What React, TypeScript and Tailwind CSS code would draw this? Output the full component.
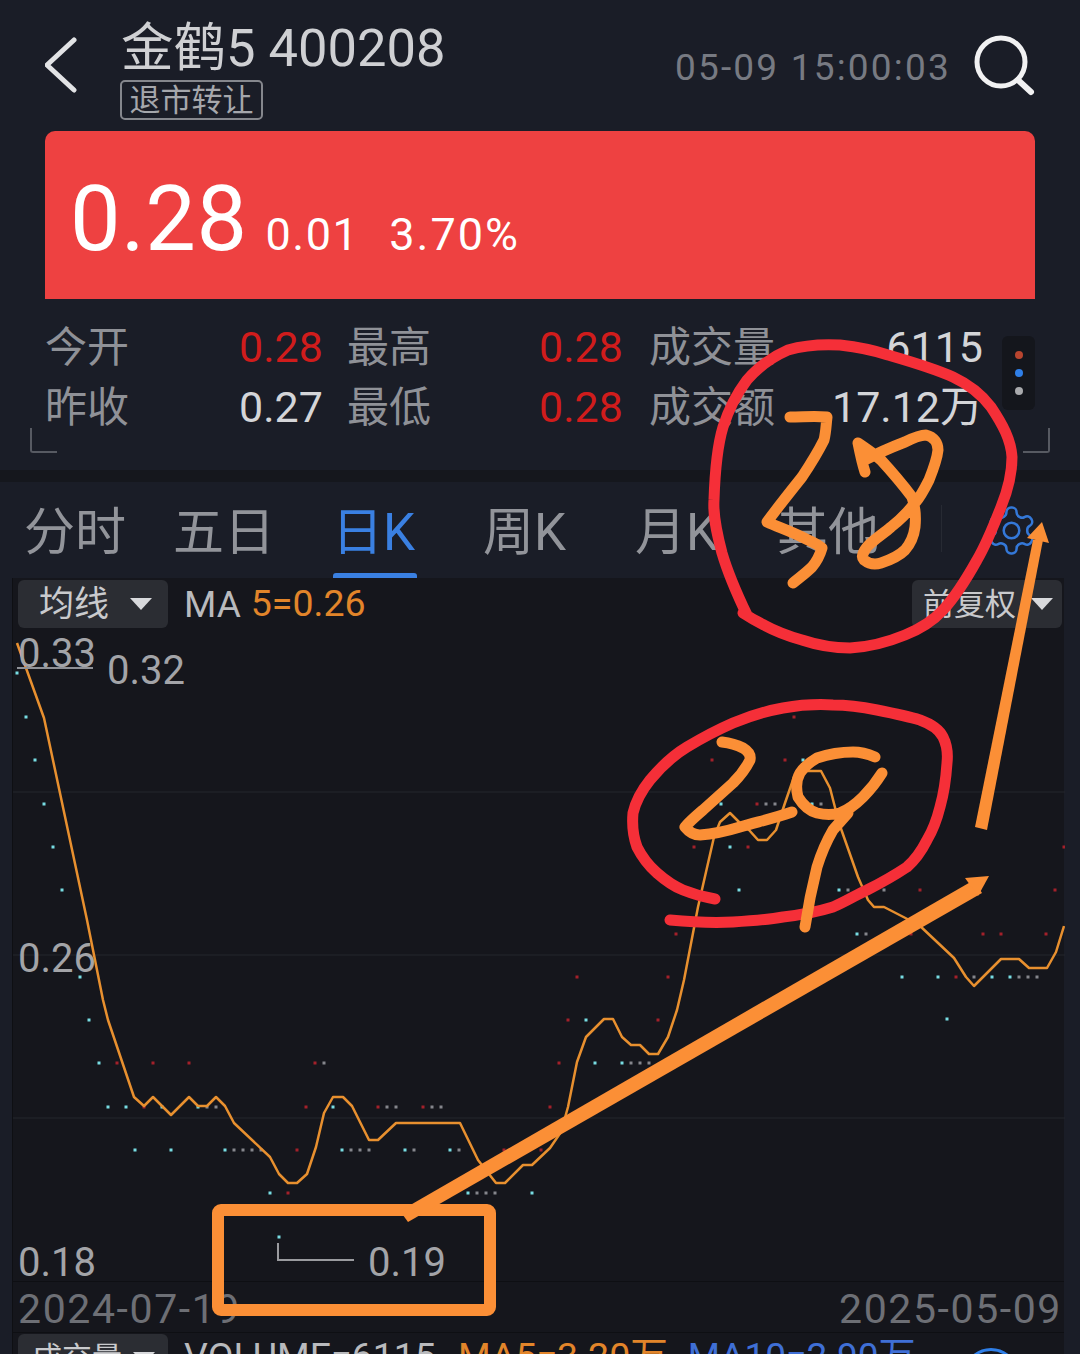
import React from "react";

const FONT = { fontFamily: 'Roboto, "Noto Sans CJK SC", sans-serif' };

const MA_LINE =
  "16,643 43,718 86,920 102,1000 107,1020 133,1097 143,1106 152,1097 170,1115 188,1097 197,1106 206,1106 215,1097 224,1106 233,1123 269,1157 278,1174 287,1183 296,1183 306,1174 315,1147 323,1113 332,1097 342,1097 351,1106 368,1140 377,1140 395,1123 459,1123 477,1160 495,1183 504,1183 522,1165 531,1165 549,1148 560,1132 567,1107 576,1062 585,1037 603,1019 612,1019 621,1037 630,1045 639,1045 648,1054 657,1054 667,1037 676,1010 683,980 697,907 713,837 719,822 729,813 738,822 748,830 757,840 766,840 775,830 784,803 793,777 802,771 820,771 829,788 838,823 857,877 867,900 873,907 883,907 918,925 953,958 965,977 973,986 1000,959 1018,959 1028,968 1046,968 1055,952 1063,926";

const CYAN: [number, number][] = [
  [16, 673], [25, 717], [34, 760], [43, 804], [52, 847], [61, 890], [79, 977], [88, 1020], [98, 1063],
  [107, 1107], [125, 1107], [161, 1107], [197, 1107], [332, 1107], [134, 1150], [170, 1150], [224, 1150],
  [341, 1150], [404, 1150], [449, 1150], [269, 1193], [467, 1193], [531, 1193], [278, 1237], [585, 1020],
  [594, 1063], [621, 1063], [802, 760], [720, 804], [811, 804], [729, 847], [738, 890], [838, 890],
  [856, 934], [901, 977], [937, 977], [991, 977], [1009, 977], [946, 1019],
];
const RED: [number, number][] = [
  [116, 1063], [152, 1063], [188, 1063], [314, 1063], [143, 1107], [305, 1107], [377, 1107], [422, 1107],
  [549, 1107], [296, 1150], [503, 1150], [540, 1150], [287, 1193], [576, 977], [667, 977], [567, 1020],
  [657, 1020], [558, 1063], [793, 717], [711, 760], [784, 760], [756, 804], [693, 847], [747, 847],
  [1063, 847], [919, 890], [1054, 890], [675, 934], [910, 934], [982, 934], [1000, 934], [1045, 934],
  [955, 977],
];
const GREY: [number, number][] = [
  [323, 1063], [206, 1107], [215, 1107], [386, 1107], [395, 1107], [431, 1107], [440, 1107], [233, 1150],
  [242, 1150], [251, 1150], [260, 1150], [350, 1150], [359, 1150], [368, 1150], [413, 1150], [458, 1150],
  [476, 1193], [485, 1193], [494, 1193], [630, 1063], [639, 1063], [648, 1063], [765, 804], [774, 804],
  [820, 804], [847, 890], [883, 890], [865, 934], [973, 977], [1018, 977], [1027, 977], [1036, 977],
];

function Dots({ points, color }: { points: [number, number][]; color: string }) {
  return (
    <g fill={color}>
      {points.map(([x, y]) => (
        <rect key={`${x}-${y}`} x={x - 1.5} y={y - 1.5} width={3} height={3} />
      ))}
    </g>
  );
}

function Caret() {
  return (
    <svg width="24" height="14" viewBox="0 0 24 14" className="shrink-0">
      <path d="M1 1h22L12 13z" fill="#d8d9dc" />
    </svg>
  );
}

function StatRow({ cells }: { cells: { label: string; value: string; tone: string }[] }) {
  return (
    <div className="grid h-[60px] grid-cols-[194px_108px_192px_108px_auto_1fr] items-center text-[42px] leading-none">
      {cells.map((c) => (
        <React.Fragment key={c.label}>
          <span className="text-[#8f9197]">{c.label}</span>
          <span className={`mt-[-2px] text-[43px] ${c.tone}`}>{c.value}</span>
        </React.Fragment>
      ))}
    </div>
  );
}

const TABS = [
  { label: "分时", w: "w-[149px]" },
  { label: "五日", w: "w-[159px]" },
  { label: "日K", w: "w-[151px]", active: true },
  { label: "周K", w: "w-[152px]" },
  { label: "月K", w: "w-[142px]" },
  { label: "其他", w: "w-[164px]" },
];

export default function App() {
  return (
    <div className="relative h-[1354px] w-[1080px] overflow-hidden bg-[#1a1d27] text-[#d5d6d9]" style={FONT}>
      <header className="flex h-[131px] pl-[45px] pr-[45px]">
        <svg width="32" height="56" viewBox="0 0 32 56" className="mt-[37px] shrink-0">
          <path d="M29 3 2 28l27 25" fill="none" stroke="#e2e3e5" strokeWidth="5" strokeLinecap="round" strokeLinejoin="round" />
        </svg>
        <div className="ml-[44px] flex flex-col">
          <div className="mt-[18px] h-[60px] text-[52.5px] leading-[60px] whitespace-nowrap text-[#cfd0d3]">金鹤5 400208</div>
          <div className="-ml-[1px] mt-[2px] flex h-[40px] w-[143px] items-center justify-center rounded-[5px] border-2 border-[#85878d] text-[31px] leading-none text-[#a5a7ac]">
            退市转让
          </div>
        </div>
        <div className="ml-auto mt-[45px] h-[46px] text-[37px] leading-[46px] tracking-[2.2px] text-[#777a82]">05-09 15:00:03</div>
        <svg width="62" height="62" viewBox="0 0 62 62" className="ml-[22px] mt-[35px] shrink-0">
          <circle cx="28" cy="27" r="24" fill="none" stroke="#f1f1f2" strokeWidth="5" />
          <path d="M45 45l13 12" fill="none" stroke="#f1f1f2" strokeWidth="6" strokeLinecap="round" />
        </svg>
      </header>

      <section className="mx-[45px] flex h-[168px] items-center rounded-t-[10px] bg-[#ee4141] pl-[25px] text-white">
        <span className="mt-[10px] text-[90px] leading-none tracking-[0.5px]">0.28</span>
        <span className="ml-[18px] mt-[38px] text-[45px] leading-none tracking-[1.5px]">0.01</span>
        <span className="ml-[30px] mt-[38px] text-[45px] leading-none tracking-[2px]">3.70%</span>
      </section>

      <section className="relative h-[171px] pl-[45px] pr-[45px] pt-[19px]">
        <StatRow
          cells={[
            { label: "今开", value: "0.28", tone: "text-[#d01c1c]" },
            { label: "最高", value: "0.28", tone: "text-[#d01c1c]" },
          ]}
        />
        <StatRow
          cells={[
            { label: "昨收", value: "0.27", tone: "text-[#d4d5d8]" },
            { label: "最低", value: "0.28", tone: "text-[#d01c1c]" },
          ]}
        />
        <div className="absolute left-[649px] top-[19px] flex w-[334px] flex-col text-[42px] leading-none">
          <div className="flex h-[60px] items-center justify-between">
            <span className="text-[#8f9197]">成交量</span>
            <span className="mt-[-2px] text-[43px] text-[#d4d5d8]">6115</span>
          </div>
          <div className="flex h-[60px] items-center justify-between">
            <span className="text-[#8f9197]">成交额</span>
            <span className="mt-[-2px] text-[43px] text-[#d4d5d8]">17.12万</span>
          </div>
        </div>
        <div className="absolute left-[1002px] top-[37px] flex h-[74px] w-[33px] flex-col items-center justify-center gap-[10px] rounded-[6px] bg-[#14161c]">
          <span className="h-[8px] w-[8px] rounded-full bg-[#b8452f]" />
          <span className="h-[8px] w-[8px] rounded-full bg-[#2f7fe8]" />
          <span className="h-[8px] w-[8px] rounded-full bg-[#a9aaad]" />
        </div>
        <div className="absolute left-[30px] top-[129px] h-[25px] w-[27px] rounded-bl-[3px] border-b-2 border-l-2 border-[#575a62]" />
        <div className="absolute left-[1023px] top-[129px] h-[25px] w-[27px] rounded-br-[3px] border-b-2 border-r-2 border-[#575a62]" />
      </section>

      <div className="h-[12px] bg-[#15171d]" />

      <nav className="flex h-[96px] pl-[24px]">
        {TABS.map((t) => (
          <div key={t.label} className={`${t.w} relative flex h-full items-center pt-[5px]`}>
            <span className={`text-[51px] leading-none whitespace-nowrap ${t.active ? "text-[#3a80e2]" : "text-[#92949a]"}`}>{t.label}</span>
            {t.active && <span className="absolute bottom-0 left-[1px] h-[5px] w-[84px] rounded-t-[3px] bg-[#3a80e2]" />}
          </div>
        ))}
        <div className="mt-[23px] h-[47px] w-px bg-[#272a33]" />
        <svg width="55" height="57" viewBox="0 0 24 24" className="ml-[42px] mt-[20px] shrink-0" fill="none" stroke="#3478d8" strokeWidth="1.1" strokeLinejoin="round">
          <path d="M12.22 2h-.44a2 2 0 0 0-2 2v.18a2 2 0 0 1-1 1.73l-.43.25a2 2 0 0 1-2 0l-.15-.08a2 2 0 0 0-2.73.73l-.22.38a2 2 0 0 0 .73 2.73l.15.1a2 2 0 0 1 1 1.72v.51a2 2 0 0 1-1 1.74l-.15.09a2 2 0 0 0-.73 2.73l.22.38a2 2 0 0 0 2.73.73l.15-.08a2 2 0 0 1 2 0l.43.25a2 2 0 0 1 1 1.73V20a2 2 0 0 0 2 2h.44a2 2 0 0 0 2-2v-.18a2 2 0 0 1 1-1.73l.43-.25a2 2 0 0 1 2 0l.15.08a2 2 0 0 0 2.73-.73l.22-.39a2 2 0 0 0-.73-2.73l-.15-.08a2 2 0 0 1-1-1.74v-.5a2 2 0 0 1 1-1.74l.15-.09a2 2 0 0 0 .73-2.73l-.22-.38a2 2 0 0 0-2.73-.73l-.15.08a2 2 0 0 1-2 0l-.43-.25a2 2 0 0 1-1-1.73V4a2 2 0 0 0-2-2z" />
          <circle cx="12" cy="12" r="3.4" />
        </svg>
      </nav>

      <main className="ml-[12px] flex h-[803px] w-[1052px] flex-col border-l border-[#0e0f13] bg-[#15161c]">
        <div className="flex h-[50px] shrink-0 items-start justify-between pl-[5px] pr-[2px] pt-[2px]">
          <div className="flex items-center">
            <div className="flex h-[48px] w-[150px] items-center rounded-[6px] bg-[#2b2d33] pl-[21px]">
              <span className="text-[35px] leading-none text-[#c9cacd]">均线</span>
              <span className="ml-[20px] flex"><Caret /></span>
            </div>
            <span className="ml-[16px] text-[37px] leading-none text-[#b9babd]">MA</span>
            <span className="ml-[10px] text-[37.5px] leading-none text-[#e2852a]">5=0.26</span>
          </div>
          <div className="flex h-[48px] w-[150px] items-center rounded-[6px] bg-[#2b2d33] pl-[11px]">
            <span className="text-[31px] leading-none text-[#c9cacd]">前复权</span>
            <span className="ml-[14px] flex"><Caret /></span>
          </div>
        </div>

        <div className="relative h-[654px] shrink-0 border-b border-[#0e0f13]">
          <svg width="1052" height="654" viewBox="12 628 1052 654" className="absolute inset-0">
            <path d="M12 792h1052M12 955h1052M12 1118h1052" stroke="#24262d" strokeWidth="1" />
            <Dots points={CYAN} color="#78dde3" />
            <Dots points={RED} color="#a3202a" />
            <Dots points={GREY} color="#85868c" />
            <polyline points={MA_LINE} fill="none" stroke="#e8902f" strokeWidth="2.5" strokeLinejoin="round" />
            <path d="M16 668h76" stroke="#8f9197" strokeWidth="2" />
            <path d="M277 1243v17h76" fill="none" stroke="#9a9b9f" strokeWidth="2" />
          </svg>
          <span className="absolute left-[5px] top-[3px] text-[40px] leading-[46px] text-[#a3a4a8]">0.33</span>
          <span className="absolute left-[94px] top-[20px] text-[40px] leading-[46px] text-[#a3a4a8]">0.32</span>
          <span className="absolute left-[5px] top-[308px] text-[40px] leading-[46px] text-[#a3a4a8]">0.26</span>
          <span className="absolute left-[5px] top-[612px] text-[40px] leading-[46px] text-[#a3a4a8]">0.18</span>
          <span className="absolute left-[355px] top-[612px] text-[40px] leading-[46px] text-[#a3a4a8]">0.19</span>
        </div>

        <div className="flex h-[51px] shrink-0 items-center justify-between border-b border-[#0e0f13] pl-[5px] pr-[2px] pt-[4px] text-[41px] leading-none tracking-[1.6px] text-[#6d6f75]">
          <span>2024-07-19</span>
          <span>2025-05-09</span>
        </div>

        <div className="flex h-[48px] shrink-0 items-start pl-[5px] pt-[1px]">
          <div className="flex h-[48px] w-[150px] shrink-0 items-center rounded-[6px] bg-[#2b2d33] pl-[14px]">
            <span className="text-[30px] leading-none text-[#c9cacd]">成交量</span>
            <span className="ml-[10px] flex"><Caret /></span>
          </div>
          <span className="ml-[16px] mt-[4px] shrink-0 text-[37.5px] leading-none whitespace-nowrap text-[#b9babd]">VOLUME=6115</span>
          <span className="ml-[22px] mt-[4px] shrink-0 text-[37.5px] leading-none whitespace-nowrap text-[#e2852a]">MA5=3.20万</span>
          <span className="ml-[20px] mt-[4px] shrink-0 text-[37px] leading-none whitespace-nowrap text-[#3f6fd6]">MA10=2.90万</span>
          <span className="ml-[47px] mt-[14px] h-[56px] w-[56px] shrink-0 rounded-full border-[3px] border-[#2f7fe8]" />
        </div>
      </main>

      {/* hand drawn marks on top of the screenshot */}
      <svg width="1080" height="1354" viewBox="0 0 1080 1354" className="pointer-events-none absolute inset-0">
        <g fill="none" stroke="#f52f38" strokeWidth="11" strokeLinecap="round" strokeLinejoin="round">
          <path d="M747 615C735 590 727 570 722 553C716 530 713 515 714 500C715 470 717 447 723 427C730 405 738 392 747 380C760 365 772 357 788 350C805 345 822 344 840 345C858 347 873 350 888 355C912 362 933 368 953 377C970 385 982 395 991 407C1003 425 1011 440 1012 457C1012 475 1008 490 1001 507C994 525 987 543 977 560C967 578 955 597 943 610C932 622 920 629 905 635C888 642 870 647 850 648C832 648 817 645 802 640C788 636 775 631 764 625C756 621 749 617 743 613" />
          <path d="M715 899C703 897 693 894 683 890C673 886 665 880 657 873C649 866 642 857 637 847C633 836 632 824 633 813C636 800 642 790 650 780C660 768 672 756 687 747C702 738 717 730 733 723C750 716 766 711 783 708C800 705 817 704 833 705C848 705 862 707 877 710C892 713 907 716 920 720C931 724 939 729 943 737C947 745 948 754 947 763C946 778 944 793 940 807C937 819 933 830 927 840C922 850 915 860 907 867C895 875 881 883 867 890C856 895 845 902 833 907C817 912 800 915 783 917C766 920 750 921 733 922C712 923 691 922 670 920" />
        </g>
        <g fill="none" stroke="#fb8f36" strokeWidth="11" strokeLinecap="round" strokeLinejoin="round">
          <path d="M790 417C803 417 815 416 827 417C826 425 826 432 824 440C818 452 810 465 802 477C790 492 778 507 767 522C778 527 790 531 802 537C810 541 818 544 822 548C820 555 817 561 812 567C806 573 799 578 793 583" />
          <path d="M858 443C860 453 862 463 865 472M865 460C878 453 892 447 905 442C913 438 920 435 926 435C934 437 938 443 938 450C937 460 933 470 929 480C925 488 921 496 915 503C908 512 900 520 891 527C883 534 873 540 867 547C863 552 861 557 864 560C869 564 875 565 881 563C890 560 899 556 905 550C911 543 914 535 915 527C916 517 915 506 912 497C903 485 892 472 881 460C873 453 865 448 858 443" />
          <path d="M722 742C730 743 737 745 743 748C748 751 751 755 750 760C746 768 740 776 733 783C723 792 713 801 703 810C696 816 690 821 685 827C689 832 694 835 700 835C713 834 727 831 740 827C757 822 775 818 792 812" />
          <path d="M875 757C868 754 861 752 853 752C841 752 829 754 817 758C810 762 804 767 800 773C796 780 796 789 798 797C803 805 810 811 817 813C825 815 833 815 840 813C848 810 856 804 863 797C870 790 877 781 882 773M848 813C843 819 838 824 833 830C826 842 821 854 817 867C812 887 808 907 805 927" />
        </g>
        <rect x="218" y="1210" width="272" height="100" rx="3" fill="none" stroke="#fb8f36" strokeWidth="12" />
        <path d="M400 1211 974 880 982 893 408 1222z" fill="#fb8f36" />
        <path d="M989 876 965 878 978 896z" fill="#fb8f36" />
        <path d="M975 827 987 830 1043 540 1033 540z" fill="#fb8f36" />
        <path d="M1042 522 1027 538 1049 543z" fill="#fb8f36" />
      </svg>
    </div>
  );
}
